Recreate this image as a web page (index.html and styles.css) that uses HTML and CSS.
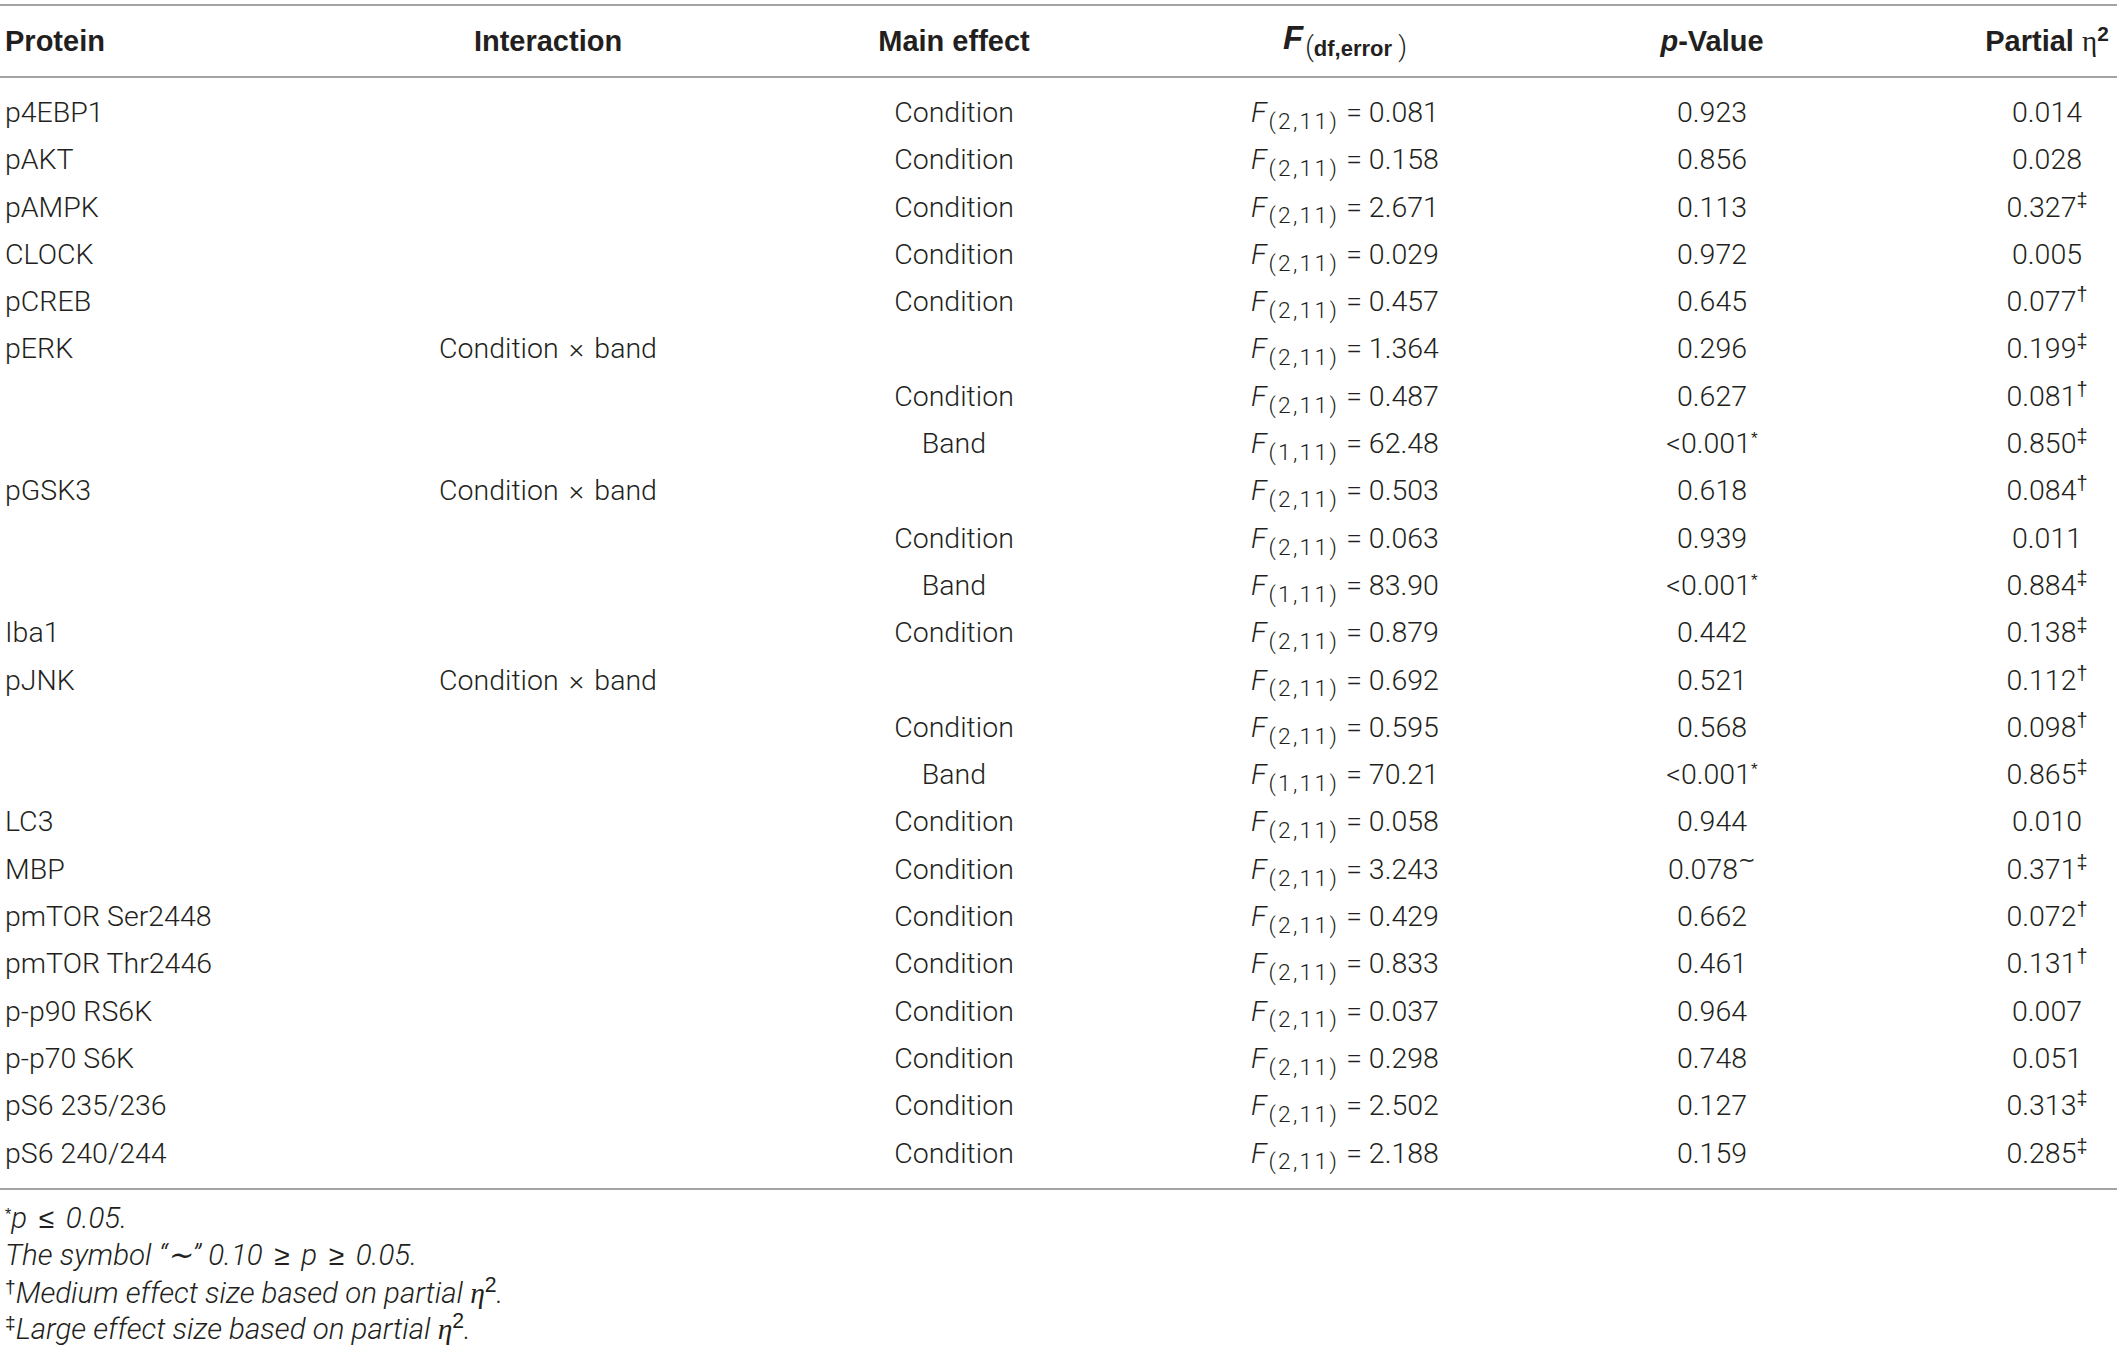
FILE: index.html
```html
<!DOCTYPE html>
<html lang="en">
<head>
<meta charset="utf-8">
<title>ANOVA results</title>
<link rel="stylesheet" href="styles.css">
</head>
<body>
<table class="anova">
  <colgroup>
    <col class="col-protein">
    <col class="col-inter">
    <col class="col-main">
    <col class="col-f">
    <col class="col-p">
    <col class="col-eta">
  </colgroup>
  <thead>
    <tr>
      <th class="left">Protein</th>
      <th>Interaction</th>
      <th>Main effect</th>
      <th><i class="fh">F</i><span class="fsub"><span class="par">(</span>df,error <span class="par">)</span></span></th>
      <th><i>p</i>-Value</th>
      <th>Partial <span class="eta">η</span><sup class="hsup">2</sup></th>
    </tr>
  </thead>
  <tbody>
    <tr><td class="left">p4EBP1</td><td></td><td>Condition</td><td><i>F</i><sub>(2,11)</sub> = 0.081</td><td>0.923</td><td>0.014</td></tr>
    <tr><td class="left">pAKT</td><td></td><td>Condition</td><td><i>F</i><sub>(2,11)</sub> = 0.158</td><td>0.856</td><td>0.028</td></tr>
    <tr><td class="left">pAMPK</td><td></td><td>Condition</td><td><i>F</i><sub>(2,11)</sub> = 2.671</td><td>0.113</td><td>0.327<sup>‡</sup></td></tr>
    <tr><td class="left">CLOCK</td><td></td><td>Condition</td><td><i>F</i><sub>(2,11)</sub> = 0.029</td><td>0.972</td><td>0.005</td></tr>
    <tr><td class="left">pCREB</td><td></td><td>Condition</td><td><i>F</i><sub>(2,11)</sub> = 0.457</td><td>0.645</td><td>0.077<sup>†</sup></td></tr>
    <tr><td class="left">pERK</td><td>Condition <span class="times">×</span> band</td><td></td><td><i>F</i><sub>(2,11)</sub> = 1.364</td><td>0.296</td><td>0.199<sup>‡</sup></td></tr>
    <tr><td class="left"></td><td></td><td>Condition</td><td><i>F</i><sub>(2,11)</sub> = 0.487</td><td>0.627</td><td>0.081<sup>†</sup></td></tr>
    <tr><td class="left"></td><td></td><td>Band</td><td><i>F</i><sub>(1,11)</sub> = 62.48</td><td>&lt;0.001<sup class="ast">*</sup></td><td>0.850<sup>‡</sup></td></tr>
    <tr><td class="left">pGSK3</td><td>Condition <span class="times">×</span> band</td><td></td><td><i>F</i><sub>(2,11)</sub> = 0.503</td><td>0.618</td><td>0.084<sup>†</sup></td></tr>
    <tr><td class="left"></td><td></td><td>Condition</td><td><i>F</i><sub>(2,11)</sub> = 0.063</td><td>0.939</td><td>0.011</td></tr>
    <tr><td class="left"></td><td></td><td>Band</td><td><i>F</i><sub>(1,11)</sub> = 83.90</td><td>&lt;0.001<sup class="ast">*</sup></td><td>0.884<sup>‡</sup></td></tr>
    <tr><td class="left">Iba1</td><td></td><td>Condition</td><td><i>F</i><sub>(2,11)</sub> = 0.879</td><td>0.442</td><td>0.138<sup>‡</sup></td></tr>
    <tr><td class="left">pJNK</td><td>Condition <span class="times">×</span> band</td><td></td><td><i>F</i><sub>(2,11)</sub> = 0.692</td><td>0.521</td><td>0.112<sup>†</sup></td></tr>
    <tr><td class="left"></td><td></td><td>Condition</td><td><i>F</i><sub>(2,11)</sub> = 0.595</td><td>0.568</td><td>0.098<sup>†</sup></td></tr>
    <tr><td class="left"></td><td></td><td>Band</td><td><i>F</i><sub>(1,11)</sub> = 70.21</td><td>&lt;0.001<sup class="ast">*</sup></td><td>0.865<sup>‡</sup></td></tr>
    <tr><td class="left">LC3</td><td></td><td>Condition</td><td><i>F</i><sub>(2,11)</sub> = 0.058</td><td>0.944</td><td>0.010</td></tr>
    <tr><td class="left">MBP</td><td></td><td>Condition</td><td><i>F</i><sub>(2,11)</sub> = 3.243</td><td>0.078<sup class="tilde">∼</sup></td><td>0.371<sup>‡</sup></td></tr>
    <tr><td class="left">pmTOR Ser2448</td><td></td><td>Condition</td><td><i>F</i><sub>(2,11)</sub> = 0.429</td><td>0.662</td><td>0.072<sup>†</sup></td></tr>
    <tr><td class="left">pmTOR Thr2446</td><td></td><td>Condition</td><td><i>F</i><sub>(2,11)</sub> = 0.833</td><td>0.461</td><td>0.131<sup>†</sup></td></tr>
    <tr><td class="left">p-p90 RS6K</td><td></td><td>Condition</td><td><i>F</i><sub>(2,11)</sub> = 0.037</td><td>0.964</td><td>0.007</td></tr>
    <tr><td class="left">p-p70 S6K</td><td></td><td>Condition</td><td><i>F</i><sub>(2,11)</sub> = 0.298</td><td>0.748</td><td>0.051</td></tr>
    <tr><td class="left">pS6 235/236</td><td></td><td>Condition</td><td><i>F</i><sub>(2,11)</sub> = 2.502</td><td>0.127</td><td>0.313<sup>‡</sup></td></tr>
    <tr><td class="left">pS6 240/244</td><td></td><td>Condition</td><td><i>F</i><sub>(2,11)</sub> = 2.188</td><td>0.159</td><td>0.285<sup>‡</sup></td></tr>
  </tbody>
</table>
<div class="notes">
  <p><sup class="ast">*</sup>p <span class="rel">≤</span> 0.05.</p>
  <p>The symbol “∼” 0.10 <span class="rel">≥</span> p <span class="rel">≥</span> 0.05.</p>
  <p><sup>†</sup>Medium effect size based on partial <span class="eta">η</span><sup class="nsup">2</sup>.</p>
  <p><sup>‡</sup>Large effect size based on partial <span class="eta">η</span><sup class="nsup">2</sup>.</p>
</div>
</body>
</html>
```
FILE: styles.css
```css
html, body {
  margin: 0;
  padding: 0;
  background: #ffffff;
}

body {
  font-family: Roboto, "Liberation Sans", Arial, sans-serif;
  font-weight: 300;
  color: #231f20;
}

.anova {
  width: 2117px;
  table-layout: fixed;
  border-collapse: collapse;
  margin-top: 4px;
}

.col-protein { width: 431px; }
.col-inter { width: 234px; }
.col-main { width: 578px; }
.col-f { width: 204px; }
.col-p { width: 530px; }
.col-eta { width: 140px; }

thead tr {
  border-top: 2px solid #a4a4a4;
  border-bottom: 2px solid #a4a4a4;
}

tbody tr:last-child {
  border-bottom: 2px solid #a4a4a4;
}

th {
  height: 70px;
  padding: 0;
  font-family: "Liberation Sans", Arial, sans-serif;
  font-weight: 700;
  font-size: 29px;
  text-align: center;
  vertical-align: middle;
  white-space: nowrap;
}

td {
  height: 47.3px;
  line-height: 47.3px;
  padding: 0;
  font-size: 28.5px;
  text-align: center;
  vertical-align: top;
  white-space: nowrap;
}

tbody tr:first-child td { padding-top: 11px; }
tbody tr:last-child td { padding-bottom: 11px; }

.left {
  text-align: left;
  padding-left: 5px;
}

.times {
  margin: 0 0.12em;
}

td sub {
  font-size: 0.8em;
  line-height: 0;
  vertical-align: -0.3em;
  letter-spacing: 0.1em;
  margin-left: 0.08em;
}

sup {
  font-family: "Liberation Sans", Arial, sans-serif;
  font-weight: 300;
  font-size: 0.7em;
  line-height: 0;
  vertical-align: 0.5em;
}

sup.ast {
  font-size: 0.6em;
}

sup.tilde {
  font-size: 0.75em;
  vertical-align: 0.55em;
}

.fh {
  font-size: 33px;
}

.fsub {
  font-size: 22px;
  vertical-align: -0.3em;
  margin-left: 2px;
}

.fsub .par {
  font-weight: 300;
  font-family: Roboto, "Liberation Sans", sans-serif;
  font-size: 27px;
}

.eta {
  font-family: "Liberation Serif", "DejaVu Serif", serif;
  font-weight: 400;
}

.hsup {
  font-weight: 700;
  font-size: 0.72em;
  vertical-align: 0.5em;
}

.notes {
  margin-top: 10px;
  padding-left: 5px;
  font-size: 29.5px;
  font-style: italic;
  line-height: 36.5px;
}

.notes p {
  margin: 0;
}

.notes .rel {
  font-family: "DejaVu Sans", sans-serif;
  font-style: normal;
  font-size: 0.95em;
  margin: 0 0.16em;
}

.notes sup {
  font-style: normal;
  font-size: 0.65em;
}

.notes sup.ast {
  font-size: 0.55em;
}

.notes .nsup {
  font-size: 0.72em;
}
```
